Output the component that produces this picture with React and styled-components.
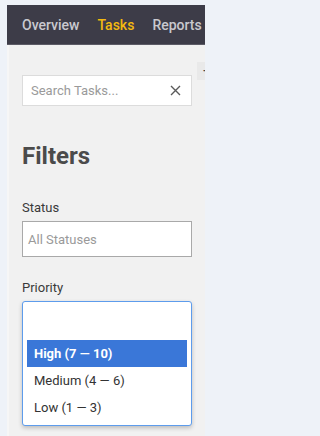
import styled, { createGlobalStyle } from "styled-components";

const GlobalStyle = createGlobalStyle`
  body {
    margin: 0;
    background: #eef2f8;
    font-family: Roboto, "Liberation Sans", sans-serif;
  }
  * { box-sizing: border-box; }
`;

const Page = styled.div`
  width: 205px;
  padding: 5px 0 0 7px;
  min-height: 436px;
  display: flex;
  flex-direction: column;
  overflow: hidden;
`;

const NavBar = styled.nav`
  height: 40px;
  background: #3d3c48;
  border-bottom: 1px solid #5c5b66;
  display: flex;
  align-items: center;
  gap: 18px;
  padding-left: 15px;
  white-space: nowrap;
`;

const NavLink = styled.span`
  font-size: 14px;
  font-weight: 500;
  color: ${(p) => (p.$active ? "#f2b90f" : "#c9c9cf")};
`;

const Body = styled.div`
  flex: 1;
  display: flex;
  background: #f1f1f1;
  border-left: 2px solid #f6f6f6;
`;

const Sidebar = styled.aside`
  width: 188px;
  flex-shrink: 0;
  padding: 30px 5px 0 13px;
`;

const SearchBox = styled.div`
  width: 170px;
  height: 31px;
  background: #fff;
  border: 1px solid #dcdcdc;
  display: flex;
  align-items: center;
  padding: 0 10px 0 8px;
  font-size: 13px;
  color: #9a9a9a;
  justify-content: space-between;
`;

const Heading = styled.h2`
  margin: 36px 0 0;
  font-size: 24px;
  line-height: 28px;
  font-weight: 700;
  color: #4b4b4b;
`;

const Label = styled.div`
  margin-top: ${(p) => p.$top}px;
  font-size: 13px;
  line-height: 16px;
  color: #3a3a3a;
`;

const Select = styled.div`
  margin-top: 5px;
  width: 170px;
  height: 36px;
  background: #fff;
  border: 1px solid #a9a9a9;
  display: flex;
  align-items: center;
  padding-left: 5px;
  font-size: 13px;
  color: #9a9a9a;
`;

const OpenSelect = styled.div`
  margin-top: 5px;
  width: 170px;
  height: 125px;
  background: #fff;
  border: 1px solid #5d9cec;
  border-radius: 3px;
  box-shadow: 0 2px 4px rgba(0, 0, 0, 0.22);
  padding: 38px 4px 0;
`;

const Option = styled.div`
  height: 27px;
  display: flex;
  align-items: center;
  padding-left: 7px;
  font-size: 13px;
  font-weight: ${(p) => (p.$selected ? 700 : 400)};
  color: ${(p) => (p.$selected ? "#fff" : "#333")};
  background: ${(p) => (p.$selected ? "#3a77d8" : "transparent")};
`;

const Main = styled.main`
  flex: 1;
  min-width: 0;
  padding-top: 17px;
  overflow: hidden;
`;

const ToolButton = styled.div`
  height: 18px;
  width: 80px;
  background: #e9e9e9;
  padding-left: 6px;
  font-size: 13px;
  line-height: 18px;
  color: #444;
  white-space: nowrap;
`;

const options = ["High (7 — 10)", "Medium (4 — 6)", "Low (1 — 3)"];

export default function App() {
  return (
    <Page>
      <GlobalStyle />
      <NavBar>
        <NavLink>Overview</NavLink>
        <NavLink $active>Tasks</NavLink>
        <NavLink>Reports</NavLink>
      </NavBar>
      <Body>
        <Sidebar>
          <SearchBox>
            <span>Search Tasks...</span>
            <svg width="11" height="11" viewBox="0 0 11 11">
              <path d="M1 1 L10 10 M10 1 L1 10" stroke="#5a5a5a" strokeWidth="1.4" />
            </svg>
          </SearchBox>
          <Heading>Filters</Heading>
          <Label $top={30}>Status</Label>
          <Select>All Statuses</Select>
          <Label $top={23}>Priority</Label>
          <OpenSelect>
            {options.map((o, i) => (
              <Option key={o} $selected={i === 0}>
                {o}
              </Option>
            ))}
          </OpenSelect>
        </Sidebar>
        <Main>
          <ToolButton>+ New</ToolButton>
        </Main>
      </Body>
    </Page>
  );
}
